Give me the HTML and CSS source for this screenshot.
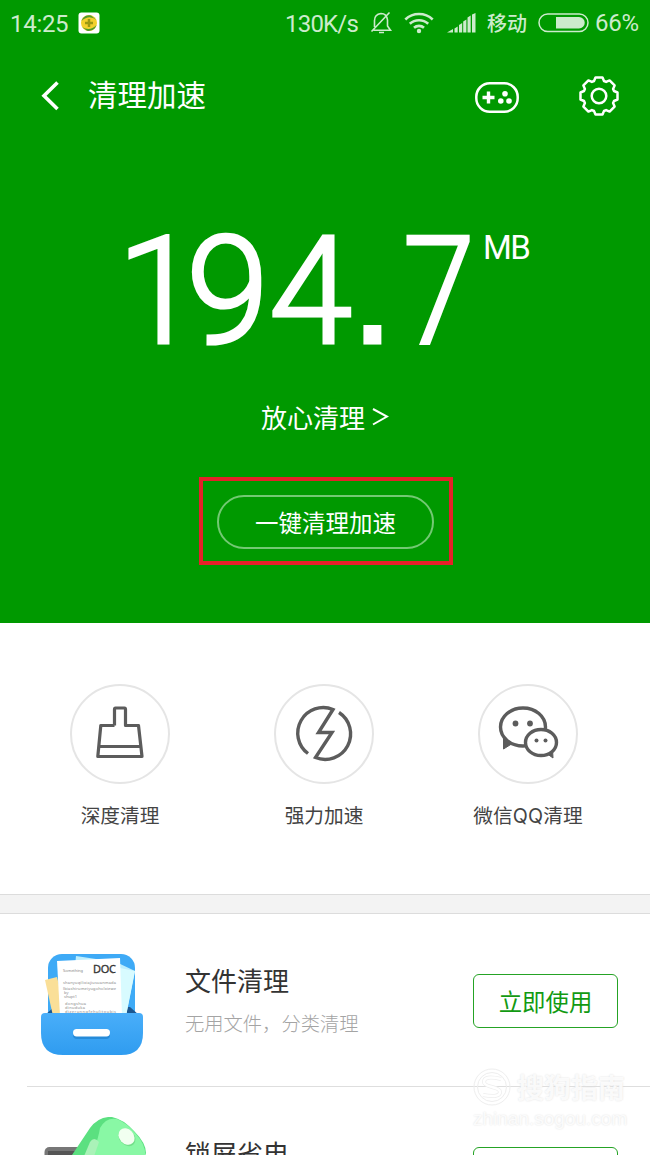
FILE: index.html
```html
<!DOCTYPE html>
<html lang="zh-CN">
<head>
<meta charset="utf-8">
<title>清理加速</title>
<link rel="stylesheet" href="styles.css">
</head>
<body>
<main class="screen">
  <section class="hero">
    <div class="status">
      <span class="time">14:25</span>
      <svg class="app-badge" width="22" height="22" viewBox="0 0 22 22"><rect x="0.5" y="0.5" width="21" height="21" rx="3" fill="#fff"/><circle cx="11" cy="11" r="8" fill="#f3d02c"/><path d="M3.500 9A8 8 0 0 1 13 3.400L18.500 8Q11 2 3.500 9zM18.500 13A8 8 0 0 1 9 18.700L4 15Q12 20 18.500 13z" fill="#4f9a2c"/><path d="M11 7v8M7 11h8" stroke="#9b9813" stroke-width="2.500"/></svg>
      <span class="speed">130K/s</span>
      <svg class="bell" width="23" height="24" viewBox="0 0 23 24" fill="none" stroke="#ccebcc" stroke-width="1.600"><path d="M4.500 16V9.500C4.500 5 7 3 11 2.500c3.500 0 6 2.500 6.500 6.500v6l3 4.300H3.500M1.500 20.500 19.500 1.500M9 21.500h5"/></svg>
      <svg class="wifi" width="30" height="22" viewBox="0 0 30 22" fill="none" stroke="#ccebcc" stroke-width="2.600"><path d="M1.300 7.500a20 20 0 0 1 27.400 0M5.800 11.800a13.500 13.500 0 0 1 18.400 0M10 15.800a7.500 7.500 0 0 1 10 0"/><circle cx="15" cy="19" r="2.200" fill="#ccebcc" stroke="none"/></svg>
      <svg class="signal" width="29" height="20" viewBox="0 0 29 20" fill="#ccebcc"><path d="M0 19.500 6 16v3.500zM7.500 15.500l3.200-2v6H7.500zM12 12l3.200-2v9.500H12zM16.200 8.500l3.200-2v13h-3.200zM20.500 4.500l3.200-2v17h-3.200zM25 1.500l3.500-1.500v19.500H25z"/></svg>
      <span class="carrier">移动</span>
      <svg class="battery" width="51" height="20" viewBox="0 0 51 20"><rect x="1" y="1" width="49" height="17.500" rx="8.700" fill="none" stroke="#ccebcc" stroke-width="1.500"/><path d="M18 4h23a5.700 5.700 0 0 1 0 11.500H18z" fill="#ccebcc"/></svg>
      <span class="percent">66%</span>
    </div>
    <header class="bar">
      <svg class="back" width="20" height="32" viewBox="0 0 20 32" fill="none" stroke="#fff" stroke-width="3.600"><path d="M17.500 2.500 4 15.700 17.500 29"/></svg>
      <h1 class="title">清理加速</h1>
      <svg class="pad" width="44" height="32" viewBox="0 0 44 32"><rect x="1.300" y="1.300" width="41.400" height="28.500" rx="13.500" fill="none" stroke="#fff" stroke-width="2.500"/><path d="M7.500 15.500h12M13.500 9.500v12" stroke="#fff" stroke-width="3.400"/><g fill="#fff"><circle cx="30" cy="11.800" r="2.800"/><circle cx="25.800" cy="19" r="2.800"/><circle cx="34" cy="19" r="2.800"/></g></svg>
      <svg class="gear" width="42" height="42" viewBox="-21 -21 42 42" fill="none" stroke="#fff" stroke-width="2.500" stroke-linejoin="round"><path d="M-3.500-18.500h7L5-15l2.100.9 3.500-1.500 5 5-1.500 3.500L15-5l3.500 1.500v7L15 5l-.9 2.100 1.500 3.500-5 5-3.500-1.500L5 15 3.500 18.500h-7L-5 15l-2.100-.9-3.500 1.500-5-5 1.500-3.500L-15 5l-3.500-1.500v-7L-15-5l.9-2.100-1.500-3.500 5-5 3.500 1.500L-5-15z"/><circle r="7.300"/></svg>
    </header>
    <div class="amount">
      <span class="d one">1</span><span class="d nine">9</span><span class="d four">4</span><span class="d dot">.</span><span class="d seven">7</span><span class="unit">MB</span>
    </div>
    <a class="safe">放心清理<svg class="more" width="17" height="20" viewBox="0 0 17 20" fill="none" stroke="#fff" stroke-width="2"><path d="M1 2 15 9.500 1 17.500"/></svg></a>
    <div class="highlight"><button class="clean">一键清理加速</button></div>
  </section>

  <nav class="tools">
    <div class="tool">
      <span class="ring"><svg width="96" height="96" viewBox="0 0 96 96" fill="none" stroke="#5c5c5c" stroke-width="3.200" stroke-linejoin="round"><path d="M42.500 39.500V23.500q0-1.500 1-1.500h9q1 0 1 1.500v16h13l3.500 31H25.800l3-31h13.700M27 60.500h42"/></svg></span>
      <span class="label">深度清理</span>
    </div>
    <div class="tool">
      <span class="ring"><svg width="96" height="96" viewBox="0 0 96 96" fill="none" stroke="#5c5c5c" stroke-width="3.400"><path d="M32 67.500A25.500 25.500 0 0 1 57 23.500L42.500 46.500H56L39.500 71.500A25.500 25.500 0 0 0 63 26.500"/></svg></span>
      <span class="label">强力加速</span>
    </div>
    <div class="tool wechat">
      <span class="ring"><svg width="96" height="96" viewBox="0 0 96 96" stroke="#5c5c5c" stroke-width="3.400"><path d="M23.500 51v12l8-5z" fill="#5c5c5c" stroke-width="1"/><ellipse cx="43" cy="41" rx="22.500" ry="19" fill="#fff"/><path d="M66 67l7 5-.5-9z" fill="#5c5c5c" stroke-width="1"/><ellipse cx="61" cy="56.500" rx="15.500" ry="13" fill="#fff"/><g fill="#5c5c5c" stroke="none"><circle cx="35.500" cy="37.500" r="2.900"/><circle cx="50" cy="37.500" r="2.900"/><circle cx="56.500" cy="54.500" r="2"/><circle cx="65.500" cy="54.500" r="2"/></g></svg></span>
      <span class="label">微信<span class="latin">QQ</span>清理</span>
    </div>
  </nav>
  <div class="gap"></div>

  <section class="list">
    <article class="item">
      <svg class="pic" width="104" height="104" viewBox="0 0 104 104">
        <defs><linearGradient id="tray" x2="0" y2="1"><stop stop-color="#49aef9"/><stop offset="1" stop-color="#2f9cf0"/></linearGradient></defs>
        <rect x="8" y="1" width="87" height="80" rx="14" fill="#3eaaf6"/>
        <path d="M14 54 5 62h94l-9-8z" fill="#1c5790"/>
        <path d="M5 27 17 24 27 63H13z" fill="#fadf98"/>
        <path d="M36 3 76 9 95 18 86 63H30z" fill="#bdeefd"/><path d="M75 14 95 18 86 63H75z" fill="#d8fbff"/>
        <path d="M17 8 80 5 82 63H20z" fill="#fff"/>
        <text class="doc-head" x="53" y="20" textLength="23">DOC</text>
        <text class="doc-tiny" x="23" y="18.500" textLength="20">Something</text>
        <g class="doc-tiny"><text x="23" y="30.500" textLength="53">shanyuqilixiajiusuanmada</text><text x="23" y="37" textLength="53">lbiashirumeiyugoholxiewe</text><text x="24" y="41">by</text><text x="24" y="45">shupt1</text><text x="25" y="52" textLength="21">dongshua</text><text x="25" y="56" textLength="20">dinuduka</text><text x="25" y="60" textLength="51">dizerunngfehulitpubis</text></g>
        <path d="M1 64q0-4 4-4h94q4 0 4 4v16q0 22-22 22H23Q1 102 1 80z" fill="url(#tray)"/>
        <rect x="33" y="78" width="37" height="8" rx="4" fill="#268bd9"/><rect x="33" y="76" width="37" height="7.500" rx="3.700" fill="#fff"/>
      </svg>
      <div class="text"><h2 class="name">文件清理</h2><p class="desc">无用文件，分类清理</p></div>
      <button class="use">立即使用</button>
    </article>
    <article class="item">
      <svg class="pic raised" width="108" height="104" viewBox="0 0 108 104">
        <rect x="4.500" y="30" width="94" height="60" rx="5" fill="#777"/><rect x="8" y="34" width="87" height="55" fill="#555"/>
        <path d="M24 50 50 11Q59-1 72 0q11 2 22 14 12 12 12 22L95 70z" fill="#5be080"/>
        <path d="M48 50Q58 24 60 11 66 0 77 2q10 4 19 15 11 12 9 25L85 70z" fill="#89f8a5"/>
        <path d="M42 44 50 25q4-6 9 0L52 45z" fill="#aaf2b8"/>
        <ellipse cx="87" cy="20.500" rx="9.500" ry="7.500" transform="rotate(47 87 20.500)" fill="#73df8a"/><ellipse cx="86.500" cy="19.500" rx="9" ry="7.200" transform="rotate(47 86.500 19.500)" fill="#f1fff0"/>
      </svg>
      <div class="text"><h2 class="name">锁屏省电</h2></div>
      <button class="use" aria-label="立即使用"></button>
    </article>
  </section>

  <aside class="watermark">
    <div class="mark-top"><svg width="38" height="38" viewBox="0 0 38 38" fill="none" stroke="#eee"><circle cx="19" cy="19" r="18"/><circle cx="19" cy="19" r="14.500"/><path d="M28 11Q11 7 11 14q0 3 8 5t8 5q0 6-17 3" stroke-width="4"/><path d="M28 11Q11 7 11 14q0 3 8 5t8 5q0 6-17 3" stroke="#fff" stroke-width="2.500"/></svg><span class="mark-name">搜狗指南</span></div>
    <div class="mark-url">zhinan.sogou.com</div>
  </aside>
</main>
</body>
</html>
```

FILE: styles.css
```css
* { box-sizing: border-box; }
body { margin: 0; background: #fff; font-family: "Noto Sans CJK SC", sans-serif; }
h1, h2, p { margin: 0; font-weight: 300; }
button { padding: 0; background: none; font-family: inherit; }
svg { display: block; flex: none; }
.screen { position: relative; width: 650px; height: 1155px; overflow: hidden; }

.hero { height: 623px; background: #009900; color: #fff; display: flex; flex-direction: column; align-items: center; }
.status { width: 100%; height: 46px; padding: 0 11px 0 10px; display: flex; align-items: center; color: #ccebcc; font: 24px/46px Roboto, sans-serif; white-space: nowrap; }
.time { width: 68px; padding-top: 2px; letter-spacing: -.3px; }
.speed { margin-left: auto; width: 73px; padding-top: 2px; letter-spacing: -.8px; }
.bell { margin-left: 12px; }
.wifi { margin-left: 11px; }
.signal { margin-left: 13px; }
.carrier { margin-left: 11px; width: 41px; font: 500 20px/46px "Noto Sans CJK SC", sans-serif; }
.battery { margin-left: 10px; }
.percent { margin-left: 6px; width: 44px; letter-spacing: -.3px; }

.bar { width: 100%; height: 100px; padding: 0 30px 0 40px; display: flex; align-items: center; }
.back { margin-right: 28px; }
.title { font-size: 29.500px; line-height: 40px; margin-top: -6px; font-weight: 400; }
.pad { margin: 4px 59px 0 auto; }

.amount { align-self: stretch; height: 200px; padding: 70px 0 0 117px; display: flex; align-items: flex-start; font-family: Roboto, sans-serif; font-weight: 300; }
.d { font-size: 150px; line-height: 153px; height: 153px; flex: none; -webkit-text-stroke: 3.200px #fff; }
.one { width: 69px; letter-spacing: -16px; }
.nine { width: 83px; letter-spacing: -1px; }
.four { width: 82px; letter-spacing: -3px; }
.dot { width: 52px; margin-top: -2px; font: 154px/153px "Liberation Sans", sans-serif; }
.seven { width: 80px; transform: scaleX(.86); transform-origin: left; letter-spacing: -1px; }
.unit { font-size: 33px; line-height: 40px; margin-top: 12px; font-weight: 400; letter-spacing: -1.500px; }

.safe { margin-top: 51px; height: 40px; display: flex; align-items: center; gap: 7px; font-size: 26px; line-height: 36px; }
.highlight { margin: 40px 0 0 2px; width: 254px; height: 88px; border: 4px solid #e62129; display: flex; justify-content: center; align-items: center; }
.clean { width: 217px; height: 54px; border: 2px solid #73c973; border-radius: 27px; color: #fff; font-size: 23.500px; line-height: 46px; margin: 1px 0 0 -1px; }

.tools { height: 271px; padding: 61px 72px 0 70px; display: flex; justify-content: space-between; }
.tool { width: 100px; display: flex; flex-direction: column; align-items: center; }
.ring { width: 100px; height: 100px; border: 2px solid #e5e5e5; border-radius: 50%; display: block; flex: none; }
.label { margin-top: 17px; font-size: 19.700px; line-height: 28px; color: #444; white-space: nowrap; }
.latin { font-family: Inter, sans-serif; letter-spacing: .3px; }
.gap { height: 20px; background: #f3f3f3; border: solid #dcdcdc; border-width: 1px 0; }

.list { padding-left: 27px; }
.item { height: 173px; border-bottom: 1px solid #dedede; padding: 39px 32px 0 13px; display: flex; align-items: flex-start; }
.raised { margin: -9px -4px 0 0; }
.text { margin: 9px 0 0 41px; }
.name { font-size: 26px; line-height: 36px; color: #333; font-weight: 400; }
.desc { margin-top: 11px; font-size: 19.300px; line-height: 28px; color: #a4a4a4; font-weight: 300; }
.use { margin: 21px 0 0 auto; width: 145px; height: 54px; border: 1px solid #25a325; border-radius: 6px; color: #129a12; font-size: 23.400px; line-height: 48px; }
.doc-head { font: 11px "Noto Sans", sans-serif; fill: #333; stroke: #333; stroke-width: .3px; }
.doc-tiny { font: 4px "Noto Sans", sans-serif; fill: #888; }

.watermark { position: absolute; left: 473px; top: 1068px; width: 160px; color: rgba(255,255,255,.85); text-shadow: 0 0 2px #ddd; }
.mark-top { display: flex; align-items: center; gap: 6px; }
.mark-name { font-size: 27px; line-height: 38px; font-weight: 700; }
.mark-url { font: 19px/26px "Liberation Sans", sans-serif; }
```
